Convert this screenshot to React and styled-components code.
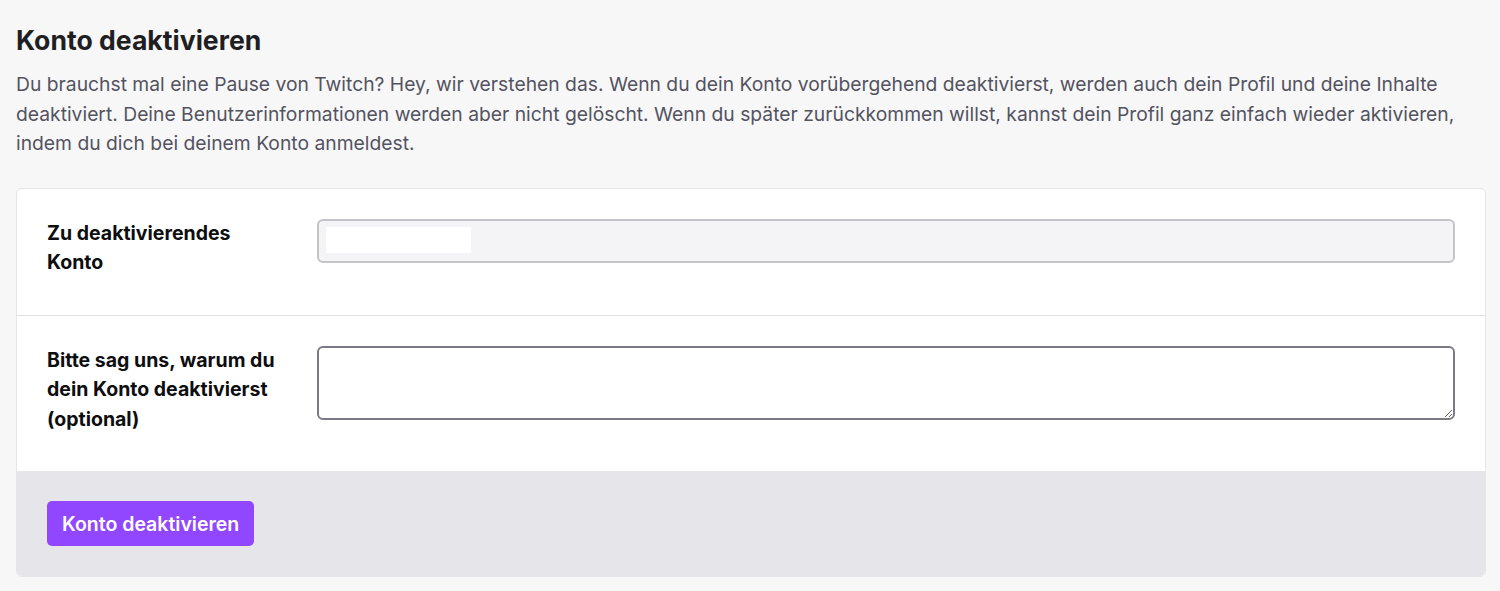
import React from "react";
import styled, { createGlobalStyle } from "styled-components";

const Global = createGlobalStyle`
  html, body { margin: 0; padding: 0; background: #f7f7f8; }
  body { font-family: Inter, "Noto Sans", sans-serif; -webkit-font-smoothing: antialiased; }
  * { box-sizing: border-box; }
`;

const Page = styled.main`
  padding: 24px 14px 14px 16px;
`;

const Title = styled.h2`
  margin: 0;
  font-size: 26.6px;
  line-height: 32px;
  font-weight: 700;
  color: #1f1f23;
`;

const Intro = styled.p`
  margin: 14px 0 29px;
  font-size: 19.3px;
  line-height: 29.5px;
  color: #53535f;
`;

const Card = styled.section`
  background: #fff;
  border: 1px solid #e6e6ea;
  border-radius: 6px;
  overflow: hidden;
`;

const Row = styled.div`
  display: flex;
  align-items: flex-start;
  padding: 30px 30px 37px;
  border-bottom: ${(p) => (p.$divider ? "1px solid #dedee3" : "none")};
`;

const Label = styled.label`
  flex: 0 0 236px;
  margin-right: 34px;
  font-size: 19.5px;
  line-height: 29.5px;
  font-weight: 700;
  color: #0e0e10;
`;

const Field = styled.div`
  flex: 1;
`;

const Input = styled.div`
  height: 44px;
  border: 2px solid #c3c3c8;
  border-radius: 6px;
  background: #f4f4f6;
  padding: 6px 7px;
`;

const Redacted = styled.span`
  display: block;
  width: 145px;
  height: 26px;
  background: #ffffff;
`;

const TextArea = styled.textarea`
  display: block;
  width: 100%;
  height: 74px;
  border: 2px solid #7b7b83;
  border-radius: 6px;
  background: #fff;
  font-family: inherit;
  font-size: 18px;
  padding: 8px 10px;
  resize: vertical;
  outline: none;
`;

const Footer = styled.div`
  background: #e6e5ea;
  padding: 30px 30px 30px;
`;

const Button = styled.button`
  height: 45px;
  padding: 0 15px;
  border: none;
  border-radius: 5px;
  background: #9147ff;
  color: #fff;
  font-family: inherit;
  font-size: 19.5px;
  font-weight: 600;
  cursor: pointer;
`;

export default function App() {
  return (
    <>
      <Global />
      <Page>
        <Title>Konto deaktivieren</Title>
        <Intro>
          Du brauchst mal eine Pause von Twitch? Hey, wir verstehen das. Wenn du dein Konto vorübergehend deaktivierst, werden auch dein Profil und deine Inhalte deaktiviert. Deine Benutzerinformationen werden aber nicht gelöscht. Wenn du später zurückkommen willst, kannst dein Profil ganz einfach wieder aktivieren, indem du dich bei deinem Konto anmeldest.
        </Intro>
        <Card>
          <Row $divider>
            <Label>Zu deaktivierendes Konto</Label>
            <Field>
              <Input>
                <Redacted />
              </Input>
            </Field>
          </Row>
          <Row>
            <Label>Bitte sag uns, warum du dein Konto deaktivierst (optional)</Label>
            <Field>
              <TextArea />
            </Field>
          </Row>
          <Footer>
            <Button>Konto deaktivieren</Button>
          </Footer>
        </Card>
      </Page>
    </>
  );
}
